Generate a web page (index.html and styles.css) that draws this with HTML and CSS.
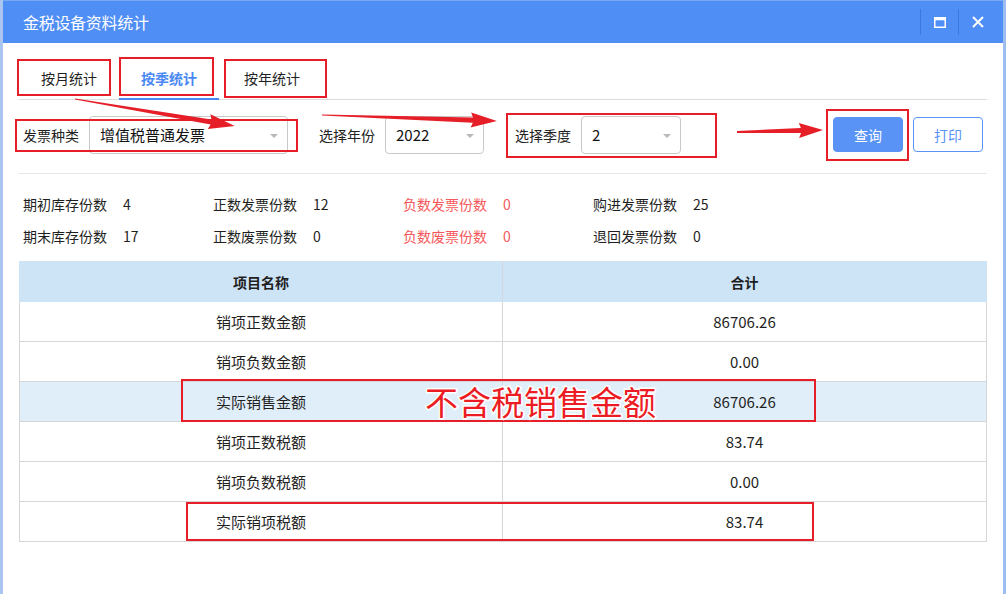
FILE: index.html
```html
<!DOCTYPE html>
<html lang="zh-CN">
<head>
<meta charset="utf-8">
<title>金税设备资料统计</title>
<link rel="stylesheet" href="styles.css">
</head>
<body>
<div class="window">
  <div class="titlebar">
    <span class="title">金税设备资料统计</span>
    <div class="controls">
      <span class="sep"></span>
      <span class="ctl">
        <svg width="12" height="11" viewBox="0 0 12 11"><rect x="0.75" y="0.75" width="10.5" height="9.5" fill="none" stroke="#fff" stroke-width="1.5"/><rect x="0.75" y="0.75" width="10.5" height="2.5" fill="#fff"/></svg>
      </span>
      <span class="sep"></span>
      <span class="ctl">
        <svg width="12" height="12" viewBox="0 0 12 12"><path d="M1 1 L11 11 M11 1 L1 11" stroke="#fff" stroke-width="2" fill="none"/></svg>
      </span>
    </div>
  </div>
  <div class="content">
    <div class="tabs">
      <div class="tab">按月统计</div>
      <div class="tab active">按季统计</div>
      <div class="tab">按年统计</div>
    </div>
    <div class="filters">
      <div class="field">
        <span class="flabel">发票种类</span>
        <div class="select w-type"><span>增值税普通发票</span><i class="caret"></i></div>
      </div>
      <div class="field">
        <span class="flabel">选择年份</span>
        <div class="select w-year"><span>2022</span><i class="caret"></i></div>
      </div>
      <div class="field">
        <span class="flabel">选择季度</span>
        <div class="select w-q"><span>2</span><i class="caret"></i></div>
      </div>
      <div class="actions">
        <button class="btn primary">查询</button>
        <button class="btn plain">打印</button>
      </div>
    </div>
    <div class="stats">
      <div class="stat"><span class="slabel">期初库存份数</span><span>4</span></div>
      <div class="stat"><span class="slabel">正数发票份数</span><span>12</span></div>
      <div class="stat neg"><span class="slabel">负数发票份数</span><span>0</span></div>
      <div class="stat"><span class="slabel">购进发票份数</span><span>25</span></div>
      <div class="stat"><span class="slabel">期末库存份数</span><span>17</span></div>
      <div class="stat"><span class="slabel">正数废票份数</span><span>0</span></div>
      <div class="stat neg"><span class="slabel">负数废票份数</span><span>0</span></div>
      <div class="stat"><span class="slabel">退回发票份数</span><span>0</span></div>
    </div>
    <table class="grid">
      <thead>
        <tr><th>项目名称</th><th>合计</th></tr>
      </thead>
      <tbody>
        <tr><td>销项正数金额</td><td>86706.26</td></tr>
        <tr><td>销项负数金额</td><td>0.00</td></tr>
        <tr class="hl"><td>实际销售金额</td><td>86706.26</td></tr>
        <tr><td>销项正数税额</td><td>83.74</td></tr>
        <tr><td>销项负数税额</td><td>0.00</td></tr>
        <tr><td>实际销项税额</td><td>83.74</td></tr>
      </tbody>
    </table>
  </div>
</div>
<svg class="annot" width="1006" height="594" viewBox="0 0 1006 594">
  <g fill="none" stroke="#e61e28" stroke-width="2">
    <rect x="18" y="60" width="92" height="35"/>
    <rect x="120" y="58" width="93" height="37"/>
    <rect x="225" y="60" width="101" height="37"/>
    <rect x="16" y="120" width="281" height="31"/>
    <rect x="507" y="114" width="209" height="43"/>
    <rect x="827" y="110" width="81" height="50"/>
    <rect x="182" y="380" width="633" height="41"/>
    <rect x="187" y="503" width="626" height="37"/>
  </g>
  <g fill="#e61e28">
    <g transform="translate(75,99) rotate(9.58)">
      <polygon points="0,-0.6 138,-2.6 136,-7.5 162,0 136,7.5 138,2.6 0,0.6"/>
    </g>
    <g transform="translate(322,115) rotate(1.96)">
      <polygon points="0,-0.6 151,-2.6 149,-7.5 175,0 149,7.5 151,2.6 0,0.6"/>
    </g>
    <g transform="translate(737,132) rotate(-1.33)">
      <polygon points="0,-1 64,-2.6 62,-7.5 86,0 62,7.5 64,2.6 0,1"/>
    </g>
  </g>
  <text class="note" x="425" y="415">不含税销售金额</text>
</svg>
</body>
</html>
```
FILE: styles.css
```css
* { box-sizing: border-box; }
html, body {
  margin: 0;
  padding: 0;
  width: 1006px;
  height: 594px;
  overflow: hidden;
  background: #ffffff;
  font-family: "Noto Sans CJK SC", "Noto Sans", sans-serif;
  color: #1f1f1f;
}
body { position: relative; }

.window {
  width: 1006px;
  height: 594px;
  border-left: 3px solid #a9c5f0;
  border-right: 3px solid #9dbcef;
  background: #fff;
}

.titlebar {
  height: 43px;
  background: #4f8ef5;
  border-top: 1px solid #7aa9f3;
  display: flex;
  align-items: center;
  justify-content: space-between;
  padding-left: 20px;
}
.title {
  color: #fff;
  font-size: 16px;
  letter-spacing: -0.3px;
}
.controls {
  display: flex;
  align-items: center;
  height: 100%;
  padding-right: 7px;
}
.sep {
  width: 1px;
  height: 26px;
  background: #3e78dc;
}
.ctl {
  width: 37px;
  height: 100%;
  display: flex;
  align-items: center;
  justify-content: center;
}

.content {
  padding: 14px 0 0 16px;
}

.tabs {
  display: flex;
  width: 968px;
  border-bottom: 1px solid #dcdcdc;
}
.tab {
  width: 100px;
  height: 43px;
  line-height: 43px;
  text-align: center;
  font-size: 14px;
  color: #1f1f1f;
  border-bottom: 2px solid transparent;
  margin-bottom: -1px;
}
.tab:nth-child(3) { padding-left: 6px; }
.tab.active {
  color: #4a89f3;
  font-weight: bold;
  border-bottom-color: #4a89f3;
}

.filters {
  display: flex;
  align-items: center;
  width: 968px;
  margin-top: 16px;
  padding: 0 4px 20px 4px;
  border-bottom: 1px solid #e6e6e6;
  height: 58px;
}
.field {
  display: flex;
  align-items: center;
  margin-right: 31px;
}
.flabel {
  font-size: 14px;
  margin-right: 10px;
  color: #222;
}
.select {
  position: relative;
  height: 38px;
  border: 1px solid #c9c9c9;
  border-radius: 4px;
  display: flex;
  align-items: center;
  padding-left: 10px;
  font-size: 15px;
  color: #111;
}
.w-type { width: 199px; }
.w-year { width: 99px; }
.w-q { width: 100px; }
.caret {
  position: absolute;
  right: 9px;
  top: 17px;
  width: 0;
  height: 0;
  border-left: 4px solid transparent;
  border-right: 4px solid transparent;
  border-top: 4px solid #b9b9b9;
}
.actions {
  display: flex;
  gap: 10px;
  margin-left: auto;
}
.btn {
  width: 70px;
  height: 35px;
  border-radius: 4px;
  font-family: inherit;
  font-size: 14px;
  cursor: pointer;
}
.btn.primary {
  background: #5893f5;
  border: 1px solid #5893f5;
  color: #fff;
}
.btn.plain {
  background: #fff;
  border: 1px solid #5893f5;
  color: #5893f5;
}

.stats {
  display: grid;
  grid-template-columns: repeat(4, 190px);
  grid-auto-rows: 32px;
  padding: 14px 0 0 4px;
  font-size: 14px;
}
.stat {
  display: flex;
  align-items: center;
  color: #1f1f1f;
}
.slabel { width: 100px; }
.stat.neg { color: #f5595b; }

.grid {
  margin-top: 9px;
  width: 968px;
  border-collapse: collapse;
  table-layout: fixed;
  font-size: 15px;
}
.grid th, .grid td {
  height: 40px;
  padding: 0;
  text-align: center;
  border: 1px solid #d6d6d6;
}
.grid th {
  background: #cde3f6;
  font-size: 14px;
  font-weight: bold;
  border-color: #cde3f6;
  border-right-color: #d4d8dc;
}
.grid th:last-child { border-right-color: #cde3f6; }
.grid th:first-child { width: 483px; }
.grid tr.hl td { background: #e0eefa; }

.annot {
  position: absolute;
  left: 0;
  top: 0;
  pointer-events: none;
}
.note {
  font-family: "Noto Sans CJK SC", sans-serif;
  font-size: 33px;
  fill: #ec1c24;
  stroke: #ffffff;
  stroke-width: 3px;
  paint-order: stroke;
}
```
